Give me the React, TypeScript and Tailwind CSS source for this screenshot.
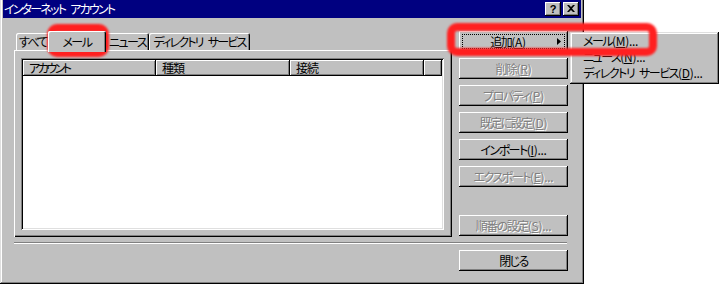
import type { ReactNode } from "react";

// Windows 9x 風の立体枠
const raised = "shadow-[inset_-1px_-1px_#000,inset_1px_1px_#fff,inset_-2px_-2px_#808080]";
const sunken = "shadow-[inset_1px_1px_#808080,inset_-1px_-1px_#fff,inset_2px_2px_#000,inset_-2px_-2px_#dfdfdf]";

// 全角スペースの代わり (詰め組みでつぶれないように)
const Gap = () => <span className="inline-block w-[5px]" />;

// アクセスキー (A) など。英数字は詰めない
const Key = ({ k, dots }: { k: string; dots?: boolean }) => (
  <span className="tracking-[-0.3px]">
    (<u>{k}</u>){dots ? "..." : ""}
  </span>
);

function Btn({
  children,
  disabled,
  className = "",
}: {
  children: ReactNode;
  disabled?: boolean;
  className?: string;
}) {
  return (
    <div
      className={`h-[21px] w-[109px] flex items-center justify-center bg-[#c0c0c0] ${raised} ${
        disabled ? "text-[#808080] [text-shadow:1px_1px_0_#fff]" : "text-black"
      } ${className}`}
    >
      {children}
    </div>
  );
}

function Tab({ children, className = "", selected }: { children: ReactNode; className?: string; selected?: boolean }) {
  return (
    <div
      className={`flex items-center justify-center bg-[#c0c0c0] rounded-t-[2px] shadow-[inset_1px_1px_#fff,inset_-1px_0_#000,inset_-2px_0_#808080] ${
        selected ? "h-[21px] -mb-[2px] z-10 relative" : "h-[17px]"
      } ${className}`}
    >
      {children}
    </div>
  );
}

function HeaderCell({ label, className = "" }: { label?: string; className?: string }) {
  return (
    <div
      className={`h-[16px] flex items-center pl-[6px] bg-[#c0c0c0] shadow-[inset_-1px_-1px_#000,inset_1px_1px_#fff,inset_-2px_-2px_#808080] ${className}`}
    >
      {label}
    </div>
  );
}

export default function App() {
  return (
    <div className="relative w-[719px] h-[284px] overflow-hidden whitespace-nowrap bg-white text-[12px] leading-none tracking-[-1.5px] text-black font-['Noto_Sans_CJK_JP','Noto_Sans_CJK_SC',sans-serif] [font-feature-settings:'palt']">
      {/* --- ダイアログ本体 --- */}
      <div className="w-[584px] h-[284px] flex flex-col bg-[#c0c0c0] shadow-[inset_-1px_-1px_#000,inset_1px_0_#dfdfdf,inset_-2px_-2px_#808080,inset_2px_0_#fff]">
        {/* タイトルバー */}
        <div className="mx-[3px] h-[18px] flex items-center justify-between bg-[#000080] text-white">
          <span className="pl-[1px] tracking-[-1.8px]">
            インターネット<Gap />アカウント
          </span>
          <div className="flex gap-[2px] mr-[2px]">
            <div className={`w-[16px] h-[14px] flex items-center justify-center bg-[#c0c0c0] text-black font-bold text-[11px] tracking-normal font-['Liberation_Sans',sans-serif] ${raised}`}>
              ?
            </div>
            <div className={`w-[16px] h-[14px] flex items-center justify-center bg-[#c0c0c0] ${raised}`}>
              <svg width="8" height="7" viewBox="0 0 8 7" className="-mt-[1px]">
                <path d="M0 0h2l2 2 2-2h2L5 3.5 8 7H6L4 5 2 7H0l3-3.5z" fill="#000" />
              </svg>
            </div>
          </div>
        </div>

        {/* 内容 */}
        <div className="flex flex-col pl-[14px] pt-[13px]">
          <div className="flex">
            {/* タブ + リスト */}
            <div className="w-[438px] flex flex-col">
              <div className="h-[19px] flex items-end pl-[2px]">
                <Tab className="w-[34px]">すべて</Tab>
                <Tab className="w-[58px] -ml-[2px]" selected>
                  メール
                </Tab>
                <Tab className="w-[45px] -ml-[2px] pl-[2px]">ニュース</Tab>
                <Tab className="w-[101px] tracking-[-1.8px]">
                  ディレクトリ<Gap />サービス
                </Tab>
              </div>
              <div className="h-[187px] pt-[8px] pl-[7px] shadow-[inset_1px_1px_#fff,inset_-1px_-1px_#000,inset_-2px_-2px_#808080]">
                <div className={`w-[423px] h-[172px] bg-white p-[2px] ${sunken}`}>
                  <div className="flex">
                    <HeaderCell label="アカウント" className="w-[133px] tracking-[-2.5px]" />
                    <HeaderCell label="種類" className="w-[134px] tracking-[-1px]" />
                    <HeaderCell label="接続" className="w-[134px] tracking-[-1px]" />
                    <HeaderCell className="w-[18px]" />
                  </div>
                </div>
              </div>
            </div>

            {/* ボタン列 */}
            <div className="ml-[7px] flex flex-col gap-[6px]">
              <div className={`relative h-[21px] w-[109px] flex items-center bg-[#c0c0c0] ${raised}`}>
                <div className="absolute inset-[3px] border border-dotted border-black" />
                <span className="flex-1 text-center">
                  追加<Key k="A" />
                </span>
                <svg width="4" height="7" viewBox="0 0 4 7" className="mr-[7px]">
                  <path d="M0 0l4 3.5L0 7z" fill="#000" />
                </svg>
              </div>
              <Btn disabled>
                削除<Key k="R" />
              </Btn>
              <Btn disabled>
                プロパティ<Key k="P" />
              </Btn>
              <Btn disabled>
                既定に設定<Key k="D" />
              </Btn>
              <Btn>
                インポート<Key k="I" dots />
              </Btn>
              <Btn disabled>
                エクスポート<Key k="E" dots />
              </Btn>
              <Btn disabled className="mt-[22px]">
                順番の設定<Key k="S" dots />
              </Btn>
            </div>
          </div>

          {/* 区切り線 */}
          <div className="mt-[5px] w-[553px] h-[2px] border-t border-t-[#808080] border-b border-b-white" />

          <div className="w-[554px] flex justify-end mt-[6px]">
            <Btn>閉じる</Btn>
          </div>
        </div>
      </div>

      {/* --- ポップアップメニュー --- */}
      <div className="absolute left-[570px] top-[32px] w-[149px] h-[52px] p-[2px] bg-[#c0c0c0] shadow-[inset_-1px_-1px_#000,inset_1px_1px_#dfdfdf,inset_-2px_-2px_#808080,inset_2px_2px_#fff]">
        <div className="h-[16px] flex items-center pl-[11px] -mt-[1px]">
          メール<Key k="M" dots />
        </div>
        <div className="h-[16px] flex items-center pl-[11px]">
          ニュース<Key k="N" dots />
        </div>
        <div className="h-[16px] flex items-center pl-[11px]">
          ディレクトリ<Gap />サービス<Key k="D" dots />
        </div>
      </div>

      {/* --- 赤い注目枠 --- */}
      <div className="absolute left-[47px] top-[24px] w-[62px] h-[33px] border-[8px] border-[#ff2020] rounded-[10px] blur-[0.8px]" />
      <div className="absolute left-[447px] top-[23px] w-[210px] h-[33px] border-[8px] border-[#ff2020] rounded-[10px] blur-[0.8px]" />
    </div>
  );
}
